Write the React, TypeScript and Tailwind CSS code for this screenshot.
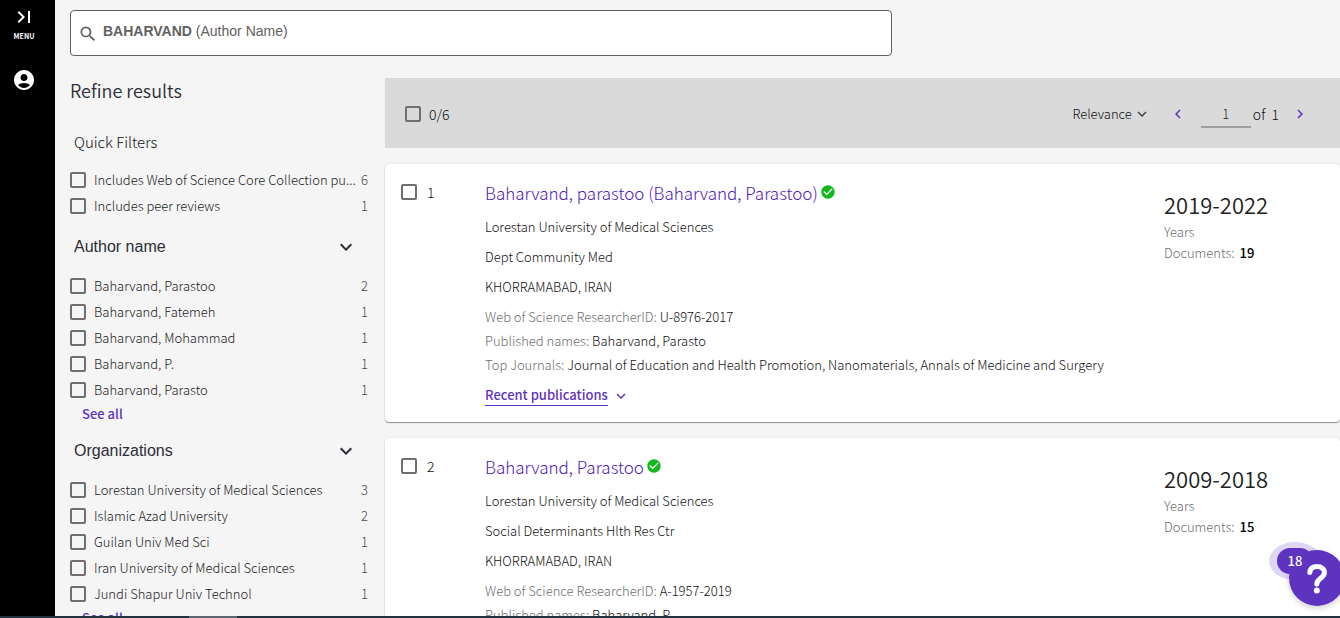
import React from "react";
import {
  MdAccountCircle,
  MdCheckCircle,
  MdChevronLeft,
  MdChevronRight,
  MdExpandMore,
  MdLastPage,
  MdSearch,
} from "react-icons/md";

type Option = { label: string; count: number };

type Author = {
  name: string;
  lines: string[];
  researcherId: string;
  published: string;
  journals: string;
  years: string;
  documents: number;
};

const quickFilters: Option[] = [
  { label: "Includes Web of Science Core Collection pu...", count: 6 },
  { label: "Includes peer reviews", count: 1 },
];

const authorNames: Option[] = [
  { label: "Baharvand, Parastoo", count: 2 },
  { label: "Baharvand, Fatemeh", count: 1 },
  { label: "Baharvand, Mohammad", count: 1 },
  { label: "Baharvand, P.", count: 1 },
  { label: "Baharvand, Parasto", count: 1 },
];

const organizations: Option[] = [
  { label: "Lorestan University of Medical Sciences", count: 3 },
  { label: "Islamic Azad University", count: 2 },
  { label: "Guilan Univ Med Sci", count: 1 },
  { label: "Iran University of Medical Sciences", count: 1 },
  { label: "Jundi Shapur Univ Technol", count: 1 },
];

const authors: Author[] = [
  {
    name: "Baharvand, parastoo (Baharvand, Parastoo)",
    lines: ["Lorestan University of Medical Sciences", "Dept Community Med", "KHORRAMABAD, IRAN"],
    researcherId: "U-8976-2017",
    published: "Baharvand, Parasto",
    journals: "Journal of Education and Health Promotion, Nanomaterials, Annals of Medicine and Surgery",
    years: "2019-2022",
    documents: 19,
  },
  {
    name: "Baharvand, Parastoo",
    lines: ["Lorestan University of Medical Sciences", "Social Determinants Hlth Res Ctr", "KHORRAMABAD, IRAN"],
    researcherId: "A-1957-2019",
    published: "Baharvand, P.",
    journals: "Journal of Education and Health Promotion",
    years: "2009-2018",
    documents: 15,
  },
];

function Checkbox({ id }: { id: string }) {
  return (
    <input
      id={id}
      type="checkbox"
      className="size-4 shrink-0 appearance-none rounded-xs border-2 border-[#6f6f6f] checked:bg-[#5e33bf]"
    />
  );
}

function OptionList({ group, options }: { group: string; options: Option[] }) {
  return (
    <ul>
      {options.map((option, i) => (
        <li key={option.label} className="flex h-[26px] items-center">
          <Checkbox id={`${group}-${i}`} />
          <label htmlFor={`${group}-${i}`} className="min-w-0 flex-1 pl-2 whitespace-nowrap">
            {option.label}
          </label>
          <span className="text-[#4a4a4a]">{option.count}</span>
        </li>
      ))}
    </ul>
  );
}

function FilterGroup({ id, title, options }: { id: string; title: string; options: Option[] }) {
  return (
    <section>
      <button
        type="button"
        className="flex h-12 w-full items-center justify-between pr-2.5 pl-1 font-['Liberation_Sans',sans-serif] text-base font-normal text-[#2d2d37]"
      >
        {title}
        <MdExpandMore size={24} />
      </button>
      <div className="pt-0.5">
        <OptionList group={id} options={options} />
      </div>
      <a href="#all" className="block pl-3 leading-[22px] font-medium text-[#5e33bf]">
        See all
      </a>
    </section>
  );
}

function Detail({ label, value }: { label: string; value: string }) {
  return (
    <p>
      <span className="text-[#6e6e6e]">{label}:</span> {value}
    </p>
  );
}

function AuthorCard({ author, index }: { author: Author; index: number }) {
  return (
    <article className="flex rounded bg-white py-4 pl-4 text-[#111111] shadow-[0_1px_1px_rgba(0,0,0,0.4),0_0_2px_rgba(0,0,0,0.12)]">
      <div className="flex w-[84px] shrink-0 items-center gap-2.5 self-start">
        <Checkbox id={`author-${index}`} />
        <label htmlFor={`author-${index}`} className="text-sm leading-6">
          {index}
        </label>
      </div>
      <div className="flex min-w-0 flex-1 flex-col gap-1.5 leading-6">
        <h2 className="mb-[3px] flex items-center gap-0.5 text-[17px] leading-[26px] font-light text-[#4f20b8]">
          <a href="#author">{author.name}</a>
          <MdCheckCircle size={16} className="mb-0.5 text-[#12b81c]" />
        </h2>
        {author.lines.map((line) => (
          <p key={line}>{line}</p>
        ))}
        <div>
          <Detail label="Web of Science ResearcherID" value={author.researcherId} />
          <Detail label="Published names" value={author.published} />
          <Detail label="Top Journals" value={author.journals} />
        </div>
        <button type="button" className="flex items-center gap-1 self-start pt-0.5 font-medium text-[#5e33bf]">
          <span className="border-b border-[#5e33bf] leading-5">Recent publications</span>
          <MdExpandMore size={18} />
        </button>
      </div>
      <div className="w-44 shrink-0 pt-[9px] leading-[21px]">
        <p className="mb-0.5 text-[22px] leading-[30px] font-[350] text-[#212121]">{author.years}</p>
        <p className="text-[#6e6e6e]">Years</p>
        <p className="text-[#6e6e6e]">
          Documents: <strong className="pl-0.5 font-medium text-black">{author.documents}</strong>
        </p>
      </div>
    </article>
  );
}

export default function App() {
  return (
    <div className="flex h-screen flex-col overflow-hidden bg-[#f5f5f5] font-['Noto_Sans_CJK_SC',sans-serif] text-[13px] font-light text-[#222222]">
      <div className="flex min-h-0 flex-1">
        <nav className="w-[55px] shrink-0 bg-black pr-[7px] text-white">
          <button type="button" className="flex w-full flex-col items-center pt-[5px]">
            <MdLastPage size={24} />
            <span className="text-[7px] leading-[14px] font-bold">MENU</span>
          </button>
          <button type="button" aria-label="Account" className="flex w-full justify-center pt-[25px]">
            <MdAccountCircle size={24} />
          </button>
        </nav>

        <div className="min-w-0 flex-1 pl-[15px]">
          <button
            type="button"
            className="mt-2.5 flex h-[46px] w-full max-w-[822px] rounded border border-[#616161] bg-white pt-3 pl-[7px] text-left font-['Liberation_Sans',sans-serif] text-sm leading-4 font-normal text-[#616161]"
          >
            <MdSearch size={20} className="mt-px mr-[5px] text-[#616161]" />
            <span>
              <b>BAHARVAND</b> (Author Name)
            </span>
          </button>

          <div className="mt-[22px] flex">
            <aside className="mr-[17px] w-[298px] shrink-0">
              <h1 className="text-lg leading-6 font-[350] text-[#2d2d37]">Refine results</h1>
              <h2 className="mt-7 mb-[13px] pl-1 text-[15px] leading-6 font-light text-[#111111]">Quick Filters</h2>
              <OptionList group="quick" options={quickFilters} />
              <div className="flex flex-col gap-0.5 pt-1">
                <FilterGroup id="name" title="Author name" options={authorNames} />
                <FilterGroup id="organization" title="Organizations" options={organizations} />
              </div>
            </aside>

            <main className="min-w-0 flex-1">
              <div className="flex h-[70px] items-center bg-[#dadada] pt-0.5 pr-[31px] pl-5">
                <Checkbox id="select-all" />
                <label htmlFor="select-all" className="pl-2 text-sm text-[#111111]">
                  0/6
                </label>
                <button type="button" className="ml-auto flex items-center gap-px text-[#111111]">
                  Relevance
                  <MdExpandMore size={18} className="text-[#424242]" />
                </button>
                <button type="button" aria-label="Previous page" className="ml-[18px] text-[#5e33bf]">
                  <MdChevronLeft size={18} />
                </button>
                <input
                  aria-label="Page"
                  defaultValue="1"
                  className="ml-3.5 h-7 w-[50px] border-b-2 border-[#9e9e9e] bg-transparent text-center"
                />
                <span className="pl-0.5 text-sm text-[#111111]">of&nbsp; 1</span>
                <button type="button" aria-label="Next page" className="ml-3 text-[#5e33bf]">
                  <MdChevronRight size={18} />
                </button>
              </div>
              <div className="flex flex-col gap-4 pt-4">
                {authors.map((author, i) => (
                  <AuthorCard key={author.name} author={author} index={i + 1} />
                ))}
              </div>
            </main>
          </div>
        </div>
      </div>

      <footer className="h-0.5 shrink-0 bg-[#22323e] pl-[189px]">
        <div className="h-0.5 w-12 bg-[#5b6670]" />
      </footer>

      <button type="button" aria-label="Help, 18 new items" className="fixed right-[-5px] bottom-3 size-14">
        <span className="absolute -top-2 -left-5 h-[38px] w-[52px] rounded-[50%] bg-[#dfd6f2]" />
        <span className="absolute inset-0 rounded-full bg-[#5e33bf] shadow-[0_2px_6px_rgba(0,0,0,0.2)]" />
        <span className="absolute -top-0.5 -left-3 h-[26px] w-9 rounded-full bg-[#5e33bf] text-[13px] leading-[26px] font-medium text-white">
          18
        </span>
        <svg viewBox="0 0 56 56" className="absolute inset-0 size-14" fill="none" stroke="#fff" strokeLinecap="round">
          <path d="M20.800 22.500c.4-3.900 3.200-6 7.200-6 4.300 0 7.400 2.400 7.400 6.300 0 5.200-7.600 5.900-7.600 11.200" strokeWidth="5" />
          <circle cx="27.800" cy="40.500" r="3" fill="#fff" stroke="none" />
        </svg>
      </button>
    </div>
  );
}
